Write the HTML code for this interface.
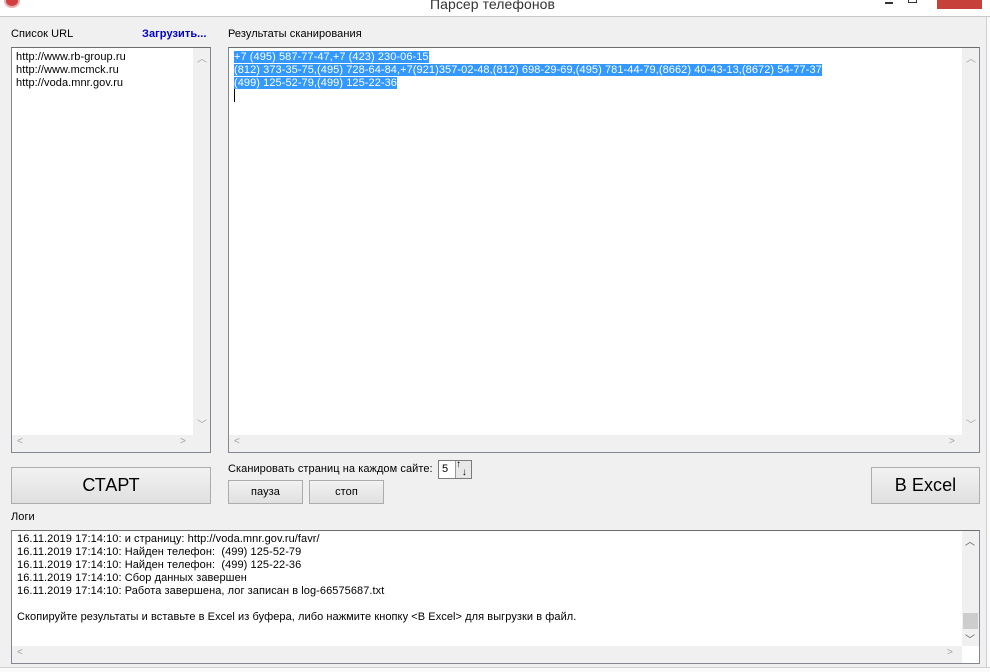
<!DOCTYPE html>
<html><head><meta charset="utf-8"><style>
*{margin:0;padding:0;box-sizing:border-box}
body{width:990px;height:672px;background:#f0f0f0;font-family:"Liberation Sans",sans-serif;font-size:11px;color:#000;position:relative;overflow:hidden;letter-spacing:0.07px}
.a{position:absolute}
.box{position:absolute;background:#fff;border:1px solid #828790;border-top-color:#6d6d6d}
.vs{position:absolute;top:0;right:0;width:17px;bottom:17px;background:#f0f0f0}
.hs{position:absolute;left:0;bottom:0;height:17px;right:0;background:#f0f0f0}
.ar{position:absolute;color:#a0a0a0;font-size:10px}
.btn{position:absolute;background:linear-gradient(#f2f2f2,#e0e0e0);border:1px solid #acacac;text-align:center}
.t{line-height:13px;white-space:pre}
.sel{background:#3399ff;color:#fff}
</style></head><body>
<div class="a" style="left:0;top:0;width:990px;height:17px;background:#fff;border-bottom:1px solid #c8c8c8"></div>
<div class="a" style="left:4px;top:-6px;width:16px;height:14px;border-radius:50%;background:#d04040;border:2px solid #e8b0b0"></div>
<div class="a" style="left:430px;top:-4px;font-size:14px;color:#333">Парсер телефонов</div>
<div class="a" style="left:885px;top:2px;width:8px;height:2px;background:#333"></div>
<div class="a" style="left:908px;top:-4px;width:9px;height:7px;border:1px solid #333"></div>
<div class="a" style="left:937px;top:0;width:45px;height:9px;background:#c7403a"></div>
<div class="a" style="left:986px;top:17px;width:4px;height:655px;background:#fafafa;border-left:1px solid #d0d0d0"></div>
<div class="a" style="left:0;top:667px;width:990px;height:5px;background:#fafafa;border-top:1px solid #d0d0d0"></div>

<div class="a" style="left:11px;top:28px">Список URL</div>
<div class="a" style="left:142px;top:28px;color:#0000cc;font-weight:bold">Загрузить...</div>
<div class="a" style="left:228px;top:28px">Результаты сканирования</div>

<div class="box" style="left:11px;top:47px;width:200px;height:406px">
<div class="a t" style="left:4px;top:3px">http://www.rb-group.ru
http://www.mcmck.ru
http://voda.mnr.gov.ru</div>
<div class="vs"><span class="ar" style="left:4px;top:2px">︿</span><span class="ar" style="left:4px;top:368px">﹀</span></div>
<div class="hs"><span class="ar" style="left:5px;top:1px">&lt;</span><span class="ar" style="left:168px;top:1px">&gt;</span></div>
</div>

<div class="box" style="left:228px;top:47px;width:752px;height:406px">
<div class="a t" style="left:5px;top:3px"><span class="sel">+7 (495) 587-77-47,+7 (423) 230-06-15</span>
<span class="sel">(812) 373-35-75,(495) 728-64-84,+7(921)357-02-48,(812) 698-29-69,(495) 781-44-79,(8662) 40-43-13,(8672) 54-77-37</span>
<span class="sel">(499) 125-52-79,(499) 125-22-36</span></div>
<div class="a" style="left:5px;top:41px;width:1px;height:13px;background:#000"></div>
<div class="vs"><span class="ar" style="left:4px;top:2px">︿</span><span class="ar" style="left:4px;top:368px">﹀</span></div>
<div class="hs"><span class="ar" style="left:5px;top:1px">&lt;</span><span class="ar" style="left:720px;top:1px">&gt;</span></div>
</div>

<div class="btn" style="left:11px;top:467px;width:200px;height:37px;font-size:18px;line-height:35px">СТАРТ</div>
<div class="a" style="left:228px;top:463px">Сканировать страниц на каждом сайте:</div>
<div class="a" style="left:438px;top:460px;width:34px;height:19px;background:#fff;border:1px solid #7a7a7a;padding:2px 3px">5</div>
<div class="a" style="left:455px;top:461px;width:16px;height:17px;background:#e8e8e8;border-left:1px solid #999;font-size:10px;line-height:8px;font-weight:bold">↑<br>&nbsp;&nbsp;↓</div>
<div class="btn" style="left:228px;top:480px;width:75px;height:24px;line-height:22px">пауза</div>
<div class="btn" style="left:309px;top:480px;width:75px;height:24px;line-height:22px">стоп</div>
<div class="btn" style="left:871px;top:467px;width:109px;height:37px;font-size:18px;line-height:35px">В Excel</div>

<div class="a" style="left:11px;top:511px">Логи</div>
<div class="box" style="left:11px;top:530px;width:969px;height:134px">
<div class="a t" style="left:5px;top:2px">16.11.2019 17:14:10: и страницу: http://voda.mnr.gov.ru/favr/
16.11.2019 17:14:10: Найден телефон:  (499) 125-52-79
16.11.2019 17:14:10: Найден телефон:  (499) 125-22-36
16.11.2019 17:14:10: Сбор данных завершен
16.11.2019 17:14:10: Работа завершена, лог записан в log-66575687.txt

Скопируйте результаты и вставьте в Excel из буфера, либо нажмите кнопку &lt;В Excel&gt; для выгрузки в файл.</div>
<div class="vs"><span class="ar" style="left:3px;top:2px;color:#555">︿</span><div class="a" style="left:1px;top:82px;width:15px;height:16px;background:#cdcdcd"></div><span class="ar" style="left:3px;top:100px;color:#555">﹀</span></div>
<div class="hs" style="right:17px"><span class="ar" style="left:5px;top:1px">&lt;</span><span class="ar" style="left:935px;top:1px">&gt;</span></div>
</div>
</body></html>
